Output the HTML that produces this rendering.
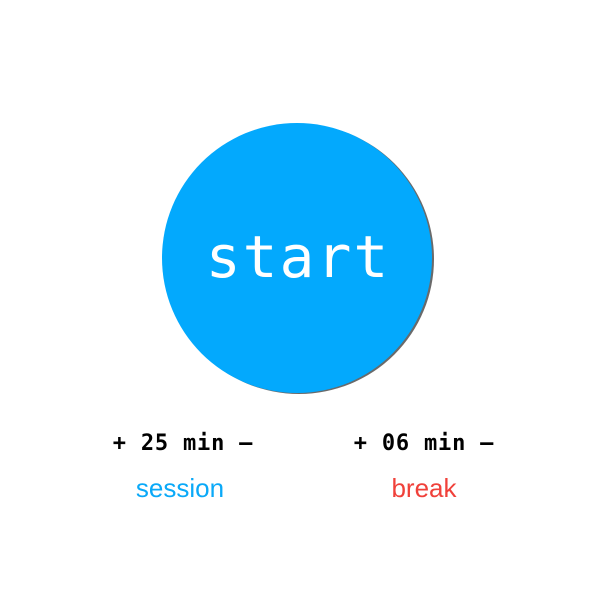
<!DOCTYPE html>
<html><head><style>
html,body{margin:0;padding:0;background:#fff;width:590px;height:590px;overflow:hidden;position:relative}
.c{position:absolute;left:162px;top:123px;width:270px;height:270px;border-radius:50%;background:#03a9fd;box-shadow:2px 1px 0 #6a6a6a}
.s{position:absolute;left:162px;top:222px;width:270px;text-align:center;color:#fff;font:58px "DejaVu Sans Mono",monospace;line-height:70px;letter-spacing:2px;text-indent:2px}
.m{position:absolute;top:431px;width:220px;text-align:center;font:bold 22px "DejaVu Sans Mono",monospace;line-height:26px;color:#000;white-space:pre;letter-spacing:0.8px}
.l{position:absolute;top:473px;width:200px;text-align:center;font:26px "Liberation Sans",sans-serif;line-height:30px}
</style></head><body>
<div class="c"></div>
<div class="s">start</div>
<div class="m" style="left:73px">+ 25 min –</div>
<div class="m" style="left:314px">+ 06 min –</div>
<div class="l" style="left:80px;color:#0aa9f8">session</div>
<div class="l" style="left:324px;color:#f0413a">break</div>
</body></html>
